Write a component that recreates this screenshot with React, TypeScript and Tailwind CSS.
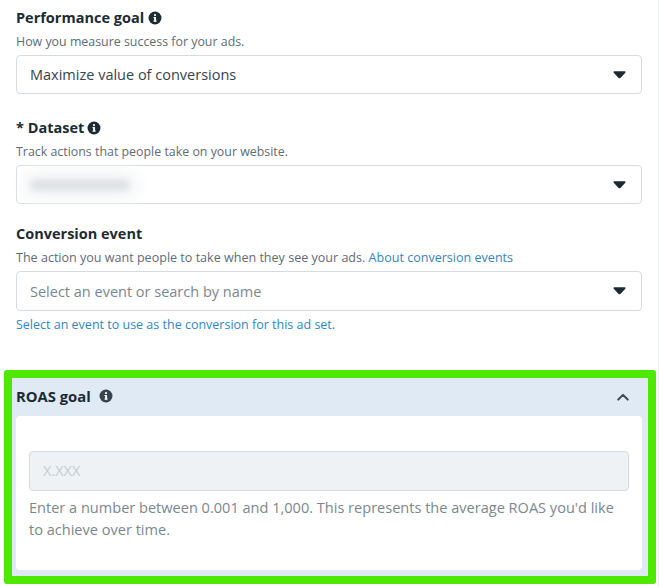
const InfoIcon = ({ className }: { className: string }) => (
  <svg viewBox="0 0 16 16" className={className}>
    <circle cx="8" cy="8" r="7.4" fill="currentColor" />
    <rect x="7" y="7" width="2.2" height="5" fill="#fff" />
    <rect x="6.2" y="7" width="2" height="1.1" fill="#fff" />
    <rect x="6.2" y="11" width="3.8" height="1.1" fill="#fff" />
    <circle cx="8" cy="4.7" r="1.25" fill="#fff" />
  </svg>
);

const Caret = () => (
  <svg viewBox="0 0 14 8" className="h-[8px] w-[13px] text-[#1c2b33]">
    <path d="M0.5 0.8 Q0.5 0 1.4 0 H12.6 Q13.5 0 13.5 0.8 Q13.5 1.3 13 1.8 L8 7.2 Q7 8 6 7.2 L1 1.8 Q0.5 1.3 0.5 0.8Z" fill="currentColor" />
  </svg>
);

const SelectBox = ({ children, h }: { children?: React.ReactNode; h: string }) => (
  <div className={`flex ${h} w-[626px] items-center justify-between rounded-[4px] border border-[#d5dbe1] bg-white pl-[13px] pr-[15px]`}>
    <div className="min-w-0">{children}</div>
    <Caret />
  </div>
);

export default function App() {
  return (
    <div
      className="relative h-[587px] w-[659px] overflow-hidden bg-white text-[#1c2b33]"
      style={{ fontFamily: '"Open Sans", "Noto Sans", sans-serif' }}
    >
      <div className="absolute bottom-0 right-0 top-0 w-[1px] bg-[#e6edf5]" />
      <div className="pl-[16px] pt-[8px]">
        <div className="flex h-[19px] items-center gap-[4px] text-[14.5px] font-bold leading-[19px]">
          Performance goal <InfoIcon className="h-[14px] w-[14px]" />
        </div>
        <div className="mt-[7px] h-[16px] text-[12.4px] leading-[16px] text-[#606c76]">How you measure success for your ads.</div>
        <div className="mt-[5px]">
          <SelectBox h="h-[39px]">
            <span className="relative top-[-1px] text-[14.5px] text-[#36444f]">Maximize value of conversions</span>
          </SelectBox>
        </div>

        <div className="mt-[24px] flex h-[19px] items-center gap-[3px] text-[14.5px] font-bold leading-[19px]">
          * Dataset <InfoIcon className="h-[14px] w-[14px]" />
        </div>
        <div className="mt-[7px] h-[16px] text-[12.4px] leading-[16px] text-[#606c76]">Track actions that people take on your website.</div>
        <div className="mt-[5px]">
          <SelectBox h="h-[39px]">
            <div className="h-[12px] w-[100px] rounded-[6px] bg-[#dfe2e5] shadow-[0_0_14px_10px_#f6f7f8] blur-[3px]" />
          </SelectBox>
        </div>

        <div className="mt-[20px] h-[19px] text-[14.5px] font-bold leading-[19px]">Conversion event</div>
        <div className="mt-[7px] h-[16px] text-[12.55px] leading-[16px] text-[#606c76]">
          The action you want people to take when they see your ads.{" "}
          <span className="text-[#3a84bd]">About conversion events</span>
        </div>
        <div className="mt-[5px]">
          <SelectBox h="h-[40px]">
            <span className="text-[14.5px] text-[#7b8790]">Select an event or search by name</span>
          </SelectBox>
        </div>
        <div className="mt-[6px] h-[16px] text-[12.5px] leading-[16px] text-[#2f87c4]">Select an event to use as the conversion for this ad set.</div>
      </div>

      <div className="ml-[4px] mt-[37px] h-[214px] w-[652px] rounded-[3px] border-[8px] border-[#4fe800] bg-[#dfeaf4]">
        <div className="flex h-[38px] items-center justify-between pl-[4px] pr-[19px]">
          <div className="relative top-[-1px] flex items-center gap-[8px] text-[14.8px] font-bold">
            ROAS goal <InfoIcon className="h-[14px] w-[14px] text-[#36444f]" />
          </div>
          <svg viewBox="0 0 14 9" className="h-[8px] w-[12px]">
            <path d="M1.5 7.5 L7 2 L12.5 7.5" fill="none" stroke="#3f4c56" strokeWidth="2.4" strokeLinecap="round" strokeLinejoin="round" />
          </svg>
        </div>
        <div className="ml-[4px] h-[154px] w-[626px] rounded-[4px] bg-white px-[13px] pt-[35px]">
          <div className="flex h-[40px] w-[600px] items-center rounded-[4px] border border-[#d5dbe1] bg-[#eff2f5] px-[13px] text-[14.5px] text-[#c6ccd2]">
            X.XXX
          </div>
          <p className="mt-[5px] w-[600px] text-[14.55px] leading-[22px] text-[#7b8790]">
            Enter a number between 0.001 and 1,000. This represents the average ROAS you'd like to achieve over time.
          </p>
        </div>
      </div>
    </div>
  );
}
